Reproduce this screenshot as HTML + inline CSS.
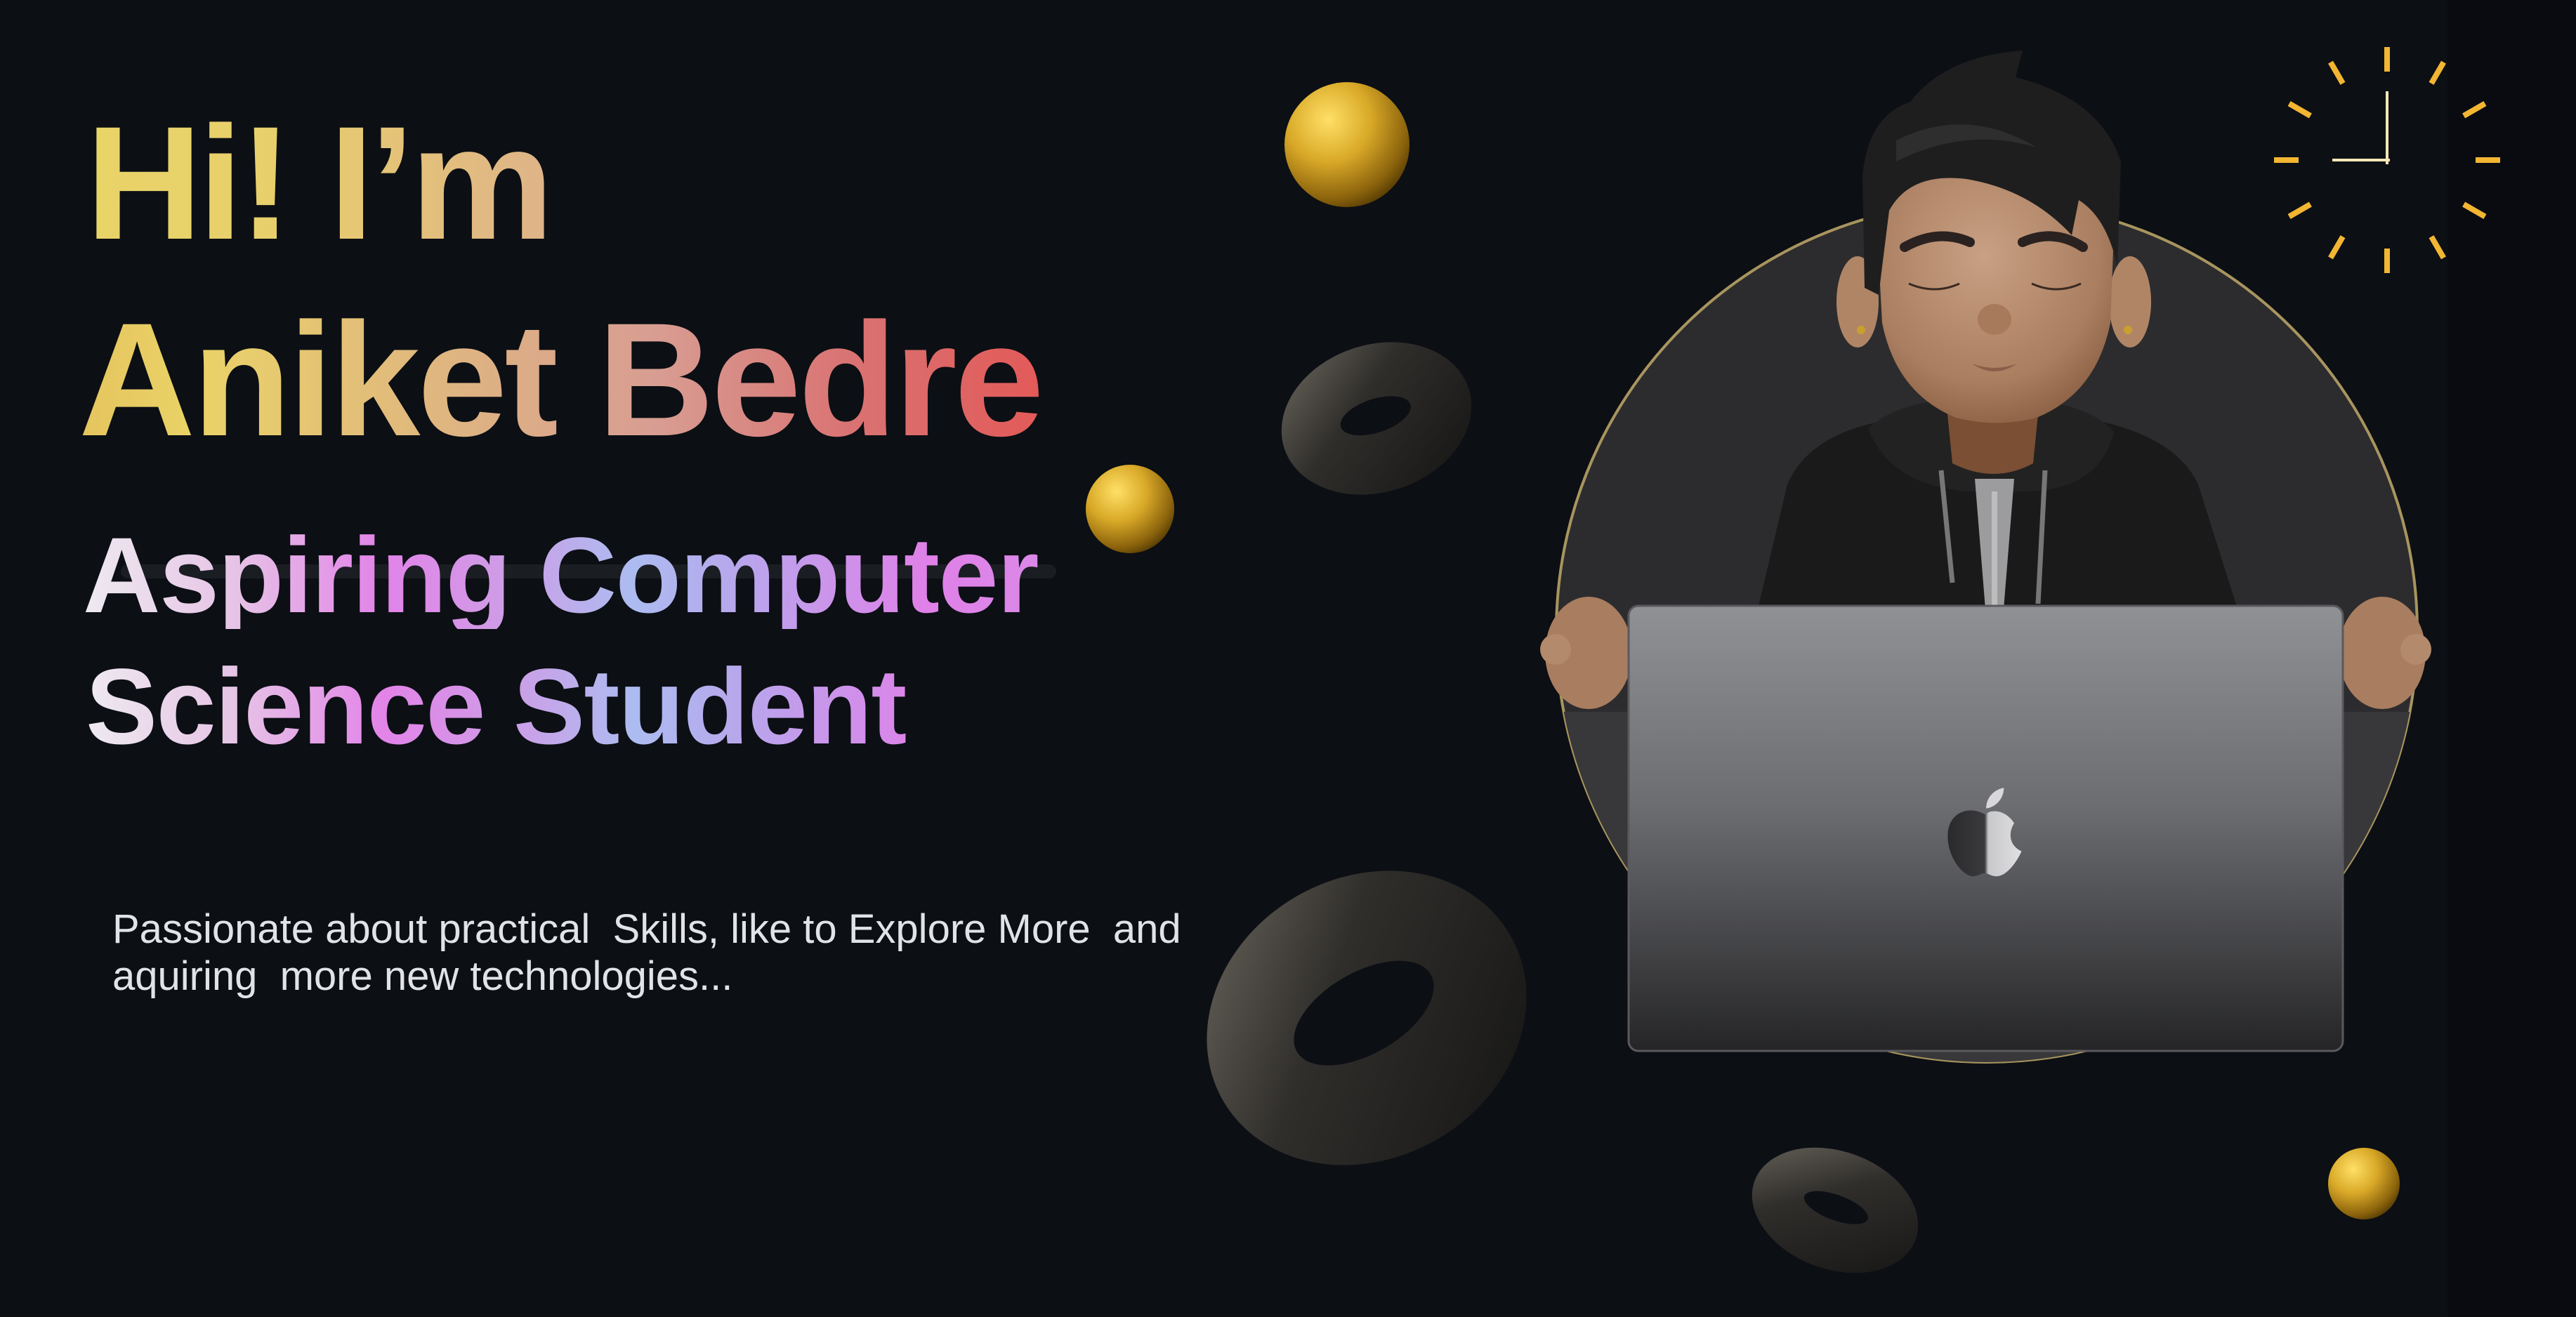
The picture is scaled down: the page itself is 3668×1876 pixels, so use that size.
<!DOCTYPE html>
<html><head><meta charset="utf-8"><style>
html,body{margin:0;padding:0;}
body{width:3668px;height:1876px;background:#0c0f14;position:relative;overflow:hidden;font-family:"Liberation Sans",sans-serif;}
svg.bg{position:absolute;left:0;top:0;}
.t{position:absolute;font-weight:bold;white-space:nowrap;-webkit-background-clip:text;background-clip:text;color:transparent;line-height:1;}
#h1{left:122px;top:146px;font-size:230px;letter-spacing:-6px;background-image:linear-gradient(90deg,#e9d468 0%,#e8cf6c 20%,#ddb08c 50%,#dd9a86 100%);width:1400px;}
#h2{left:112px;top:426px;font-size:230px;letter-spacing:-4px;background-image:linear-gradient(90deg,#e5c45e 0%,#ead367 12%,#deb382 40%,#d89d92 60%,#d97373 80%,#e25a58 100%);}
#h3,#h4{font-size:153px;letter-spacing:-1.5px;background-image:linear-gradient(90deg,#eeeaf0 0%,#e6c4e6 15%,#e283e8 30%,#cf9ce6 42%,#acbcf0 55%,#b8a6ec 66%,#e080e8 85%,#d88ce8 100%);width:1420px;}
#h3{left:118px;top:743px;}
#h4{left:122px;top:930px;}
#p{position:absolute;left:160px;top:1290px;font-size:58px;line-height:67px;color:#e2e3e6;white-space:nowrap;letter-spacing:0px;}
</style></head><body>
<svg class="bg" width="3668" height="1876" viewBox="0 0 3668 1876">
<defs>
<radialGradient id="gold" cx="0.35" cy="0.3" r="0.75"><stop offset="0" stop-color="#ffe066"/><stop offset="0.45" stop-color="#d9a928"/><stop offset="0.85" stop-color="#8a620c"/><stop offset="1" stop-color="#5a3f05"/></radialGradient>
<linearGradient id="dn" x1="0" y1="0" x2="1" y2="1"><stop offset="0" stop-color="#6d6960"/><stop offset="0.4" stop-color="#302e2b"/><stop offset="1" stop-color="#141414"/></linearGradient>
<linearGradient id="lap" x1="0" y1="0" x2="0" y2="1"><stop offset="0" stop-color="#909195"/><stop offset="0.45" stop-color="#6c6d71"/><stop offset="1" stop-color="#252527"/></linearGradient>
<radialGradient id="face" cx="0.45" cy="0.35" r="0.7"><stop offset="0" stop-color="#c9a084"/><stop offset="0.7" stop-color="#aa7e60"/><stop offset="1" stop-color="#8a5e42"/></radialGradient>
<linearGradient id="apl" x1="0" y1="0" x2="1" y2="0"><stop offset="0" stop-color="#2a2a2c"/><stop offset="0.5" stop-color="#3a3a3c"/><stop offset="0.55" stop-color="#c8c8ca"/><stop offset="1" stop-color="#e0e0e2"/></linearGradient>
<clipPath id="cc"><circle cx="2829" cy="900" r="613"/></clipPath>
</defs>
<rect x="172" y="804" width="1332" height="20" rx="10" fill="#1a1d22"/>
<rect x="3485" y="0" width="183" height="1876" fill="#090b10"/>
<circle cx="2829" cy="900" r="613" fill="#2c2c2e" stroke="#a8955e" stroke-width="4"/>
<rect x="2190" y="1014" width="1300" height="600" fill="#38383a" clip-path="url(#cc)"/>
<path d="M2500,880 L2545,690 Q2575,620 2680,600 L2990,600 Q3100,625 3130,690 L3190,880 Z" fill="#1a1a1a"/>
<path d="M2660,610 Q2700,575 2770,570 L2900,570 Q2980,580 3010,615 Q2990,700 2880,700 L2800,700 Q2690,690 2660,610 Z" fill="#222"/>
<path d="M2770,560 L2905,560 L2895,660 Q2840,690 2780,660 Z" fill="#7a4f33"/>
<path d="M2812,682 L2868,682 L2852,880 L2828,880 Z" fill="#9c9c9e"/>
<line x1="2840" y1="700" x2="2840" y2="880" stroke="#bdbdbd" stroke-width="8"/>
<line x1="2764" y1="670" x2="2780" y2="830" stroke="#777" stroke-width="7"/>
<line x1="2912" y1="670" x2="2902" y2="860" stroke="#777" stroke-width="7"/>
<ellipse cx="2645" cy="430" rx="30" ry="65" fill="#b08566"/>
<ellipse cx="3033" cy="430" rx="30" ry="65" fill="#b08566"/>
<circle cx="2650" cy="470" r="6" fill="#c9a030"/><circle cx="3030" cy="470" r="6" fill="#c9a030"/>
<path d="M2673,330 Q2670,240 2842,235 Q3012,240 3010,330 L3005,460 Q2985,560 2900,595 Q2842,610 2785,595 Q2700,560 2680,460 Z" fill="url(#face)"/>
<path d="M2712,352 Q2760,325 2805,345" stroke="#2a2220" stroke-width="14" fill="none" stroke-linecap="round"/>
<path d="M2880,345 Q2925,325 2966,352" stroke="#2a2220" stroke-width="14" fill="none" stroke-linecap="round"/>
<path d="M2718,404 Q2755,420 2790,404" stroke="#3a2a22" stroke-width="3" fill="none"/>
<path d="M2893,404 Q2928,420 2963,404" stroke="#3a2a22" stroke-width="3" fill="none"/>
<ellipse cx="2840" cy="455" rx="24" ry="22" fill="#a87a5c"/>
<path d="M2808,518 Q2840,530 2872,518 Q2840,540 2808,518 Z" fill="#8a5e48"/>
<path d="M2655,410 L2652,250 Q2660,165 2720,145 Q2770,80 2880,72 L2870,110 Q2990,140 3020,230 L3015,380 Q3000,310 2960,285 L2950,335 Q2890,270 2800,255 Q2720,245 2690,300 L2675,420 Z" fill="#1e1e1e"/>
<path d="M2700,200 Q2800,150 2900,210 Q2800,180 2700,230 Z" fill="#2e2e2e"/>
<ellipse cx="2262" cy="930" rx="62" ry="80" fill="#a97d5f"/>
<ellipse cx="3392" cy="930" rx="62" ry="80" fill="#a97d5f"/>
<circle cx="2215" cy="925" r="22" fill="#b48a6c"/><circle cx="3440" cy="925" r="22" fill="#b48a6c"/>
<rect x="2319" y="863" width="1017" height="634" rx="14" fill="url(#lap)" stroke="#5a5a5e" stroke-width="3"/>
<g transform="translate(2826,1181) scale(1.05)">
<path d="M0,-20 C-20,-32 -48,-24 -50,6 C-52,36 -30,64 -16,64 C-8,64 -6,60 0,60 C6,60 8,64 16,64 C30,64 44,44 50,30 C36,24 30,8 40,-8 C34,-18 22,-26 10,-24 C6,-24 2,-20 0,-20 Z" fill="url(#apl)"/>
<path d="M2,-28 C2,-44 14,-54 26,-56 C26,-42 16,-30 2,-28 Z" fill="#d8d8da"/>
</g>
<g transform="translate(3399,228)" stroke="#f2b632" stroke-width="8" stroke-linecap="butt">
<g id="tk"><line x1="0" y1="-161" x2="0" y2="-126"/></g>
<use href="#tk" transform="rotate(30)"/><use href="#tk" transform="rotate(60)"/><use href="#tk" transform="rotate(90)"/>
<use href="#tk" transform="rotate(120)"/><use href="#tk" transform="rotate(150)"/><use href="#tk" transform="rotate(180)"/>
<use href="#tk" transform="rotate(210)"/><use href="#tk" transform="rotate(240)"/><use href="#tk" transform="rotate(270)"/>
<use href="#tk" transform="rotate(300)"/><use href="#tk" transform="rotate(330)"/>
<line x1="0" y1="6" x2="0" y2="-98" stroke="#f5e7b5" stroke-width="4"/>
<line x1="4" y1="0" x2="-78" y2="0" stroke="#f5e7b5" stroke-width="4"/>
</g>
<circle cx="1918" cy="206" r="89" fill="url(#gold)"/>
<circle cx="1609" cy="725" r="63" fill="url(#gold)"/>
<circle cx="3366" cy="1686" r="51" fill="url(#gold)"/>
<g transform="translate(1960,596) rotate(-18)">
<ellipse rx="138" ry="105" fill="url(#dn)"/><ellipse rx="52" ry="24" cy="-4" fill="#0c0f14"/></g>
<g transform="translate(1946,1450) rotate(-30)">
<ellipse rx="236" ry="200" fill="url(#dn)"/><ellipse rx="110" ry="58" cy="-8" fill="#0c0f14"/></g>
<g transform="translate(2613,1724) rotate(20)">
<ellipse rx="122" ry="84" fill="url(#dn)"/><ellipse rx="48" ry="18" cy="-4" fill="#0c0f14"/></g>
</svg>
<div class="t" id="h1">Hi! I’m</div>
<div class="t" id="h2">Aniket Bedre</div>
<div class="t" id="h3">Aspiring Computer</div>
<div class="t" id="h4">Science Student</div>
<div id="p">Passionate about practical&nbsp; Skills, like to Explore More&nbsp; and<br>aquiring&nbsp; more new technologies...</div>
</body></html>
